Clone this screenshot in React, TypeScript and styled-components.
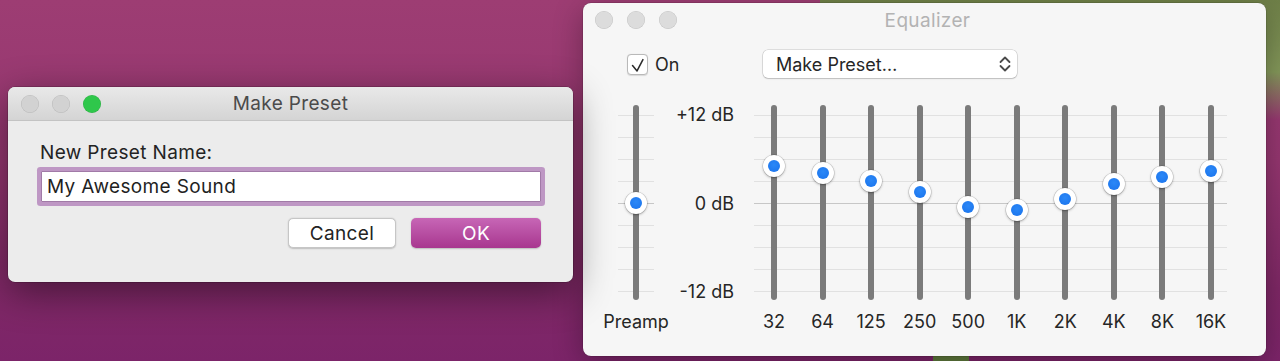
import React from "react";
import styled, { createGlobalStyle } from "styled-components";

const GlobalStyle = createGlobalStyle`
  html, body {
    margin: 0;
    padding: 0;
  }
  body {
    width: 1280px;
    height: 361px;
    overflow: hidden;
    font-family: Inter, "Noto Sans", "Liberation Sans", sans-serif;
    -webkit-font-smoothing: antialiased;
  }
`;

const Desktop = styled.div`
  position: relative;
  width: 1280px;
  height: 361px;
  overflow: hidden;
  background:
    linear-gradient(#5f7a3c, #5f7a3c) 933px 355px / 36px 6px no-repeat,
    linear-gradient(180deg, #6f8048 0%, #84985a 60%, rgba(150, 70, 120, 0) 100%) 820px 0 / 460px 120px no-repeat,
    linear-gradient(180deg, #9d3d73 0%, #953670 45%, #7f2866 80%, #7c2469 100%);
`;

const Window = styled.div<{ $left: number; $top: number; $width: number; $height: number }>`
  position: absolute;
  left: ${(p) => p.$left}px;
  top: ${(p) => p.$top}px;
  width: ${(p) => p.$width}px;
  height: ${(p) => p.$height}px;
  border-radius: 7px;
  overflow: hidden;
  display: flex;
  flex-direction: column;
`;

const PresetWindow = styled(Window)`
  z-index: 2;
  background: #ececec;
  box-shadow: 0 0 0 0.5px rgba(0, 0, 0, 0.3), 0 10px 38px rgba(0, 0, 0, 0.45);
`;

const EqWindow = styled(Window)`
  z-index: 1;
  border-radius: 8px;
  background: #f6f6f6;
  box-shadow: 0 0 0 0.5px rgba(0, 0, 0, 0.2), 0 8px 30px rgba(0, 0, 0, 0.3);
`;

const TitleBar = styled.div<{ $plain?: boolean }>`
  flex: none;
  height: ${(p) => (p.$plain ? 34 : 33)}px;
  display: grid;
  grid-template-columns: 1fr auto 1fr;
  align-items: center;
  padding: ${(p) => (p.$plain ? "0 6px 0 12px" : "0 13px")};
  background: ${(p) => (p.$plain ? "transparent" : "linear-gradient(#e9e9e9, #d4d4d4)")};
  border-bottom: ${(p) => (p.$plain ? "none" : "1px solid #c3c3c3")};
`;

const Lights = styled.div<{ $gap: number }>`
  display: flex;
  gap: ${(p) => p.$gap}px;
`;

const Light = styled.span<{ $color: string }>`
  width: 18px;
  height: 18px;
  border-radius: 50%;
  background: ${(p) => p.$color};
  box-shadow: inset 0 0 0 0.5px rgba(0, 0, 0, 0.12);
`;

const Title = styled.div<{ $dim?: boolean }>`
  font-size: 19px;
  letter-spacing: 0.35px;
  color: ${(p) => (p.$dim ? "#b3b3b3" : "#4b4b4b")};
  white-space: nowrap;
`;

const PresetBody = styled.div`
  display: flex;
  flex-direction: column;
  padding: 20px 32px 0 32px;
  font-size: 19px;
  letter-spacing: 0.35px;
`;

const FieldLabel = styled.label`
  line-height: 23px;
  color: #232323;
`;

const NameInput = styled.input`
  box-sizing: border-box;
  margin: 7px 0 0 1px;
  width: 500px;
  height: 31px;
  padding: 0 5px;
  border: 1px solid #a17aa7;
  outline: none;
  background: #fff;
  box-shadow: 0 0 0 4px #be97c4;
  border-radius: 1px;
  font: inherit;
  letter-spacing: inherit;
  color: #1f1f1f;
`;

const ButtonRow = styled.div`
  display: flex;
  justify-content: flex-end;
  gap: 15px;
  margin-top: 16px;
`;

const Button = styled.button<{ $primary?: boolean; $width: number }>`
  width: ${(p) => p.$width}px;
  height: 30px;
  border-radius: 5px;
  font: inherit;
  letter-spacing: inherit;
  padding: 0;
  border: ${(p) => (p.$primary ? "none" : "0.5px solid #c6c6c6")};
  color: ${(p) => (p.$primary ? "#fff" : "#232323")};
  background: ${(p) => (p.$primary ? "linear-gradient(#c766b6, #a8378f)" : "#fff")};
  box-shadow: 0 0.5px 1.5px rgba(0, 0, 0, 0.2);
`;

const Controls = styled.div`
  display: flex;
  align-items: center;
  height: 28px;
  margin-top: 13px;
  padding-left: 44px;
`;

const CheckLabel = styled.div`
  width: 136px;
  display: flex;
  align-items: center;
  gap: 7px;
  font-size: 18px;
  color: #262626;
`;

const CheckBox = styled.span`
  width: 21px;
  height: 21px;
  box-sizing: border-box;
  border-radius: 4px;
  background: #fff;
  border: 0.5px solid #b9b9b9;
  box-shadow: 0 0.5px 1px rgba(0, 0, 0, 0.12);
  display: flex;
`;

const Select = styled.div`
  width: 254px;
  height: 28px;
  box-sizing: border-box;
  border-radius: 5px;
  background: #fff;
  box-shadow: 0 0 0 0.5px rgba(0, 0, 0, 0.2), 0 1px 1.5px rgba(0, 0, 0, 0.15);
  display: flex;
  align-items: center;
  justify-content: space-between;
  padding: 0 5px 0 13px;
  font-size: 18px;
  color: #262626;
`;

const SliderArea = styled.div`
  display: flex;
  align-items: flex-start;
  margin-top: 27px;
  padding-left: 35px;
`;

const Column = styled.div<{ $width: number }>`
  width: ${(p) => p.$width}px;
  display: flex;
  flex-direction: column;
  align-items: center;
`;

const Rail = styled.div<{ $width: number; $padLeft?: number; $padRight?: number }>`
  box-sizing: border-box;
  width: ${(p) => p.$width}px;
  height: 195px;
  display: flex;
  justify-content: ${(p) => (p.$padLeft ? "space-between" : "center")};
  padding: 0 ${(p) => p.$padRight ?? 0}px 0 ${(p) => p.$padLeft ?? 0}px;
  background-image:
    linear-gradient(#c7c7c7, #c7c7c7),
    repeating-linear-gradient(to bottom, transparent 0 10px, #e1e1e1 10px 11px, transparent 11px 22px);
  background-size: 100% 1px, 100% 195px;
  background-position: 0 98px, 0 0;
  background-repeat: no-repeat;
`;

const Track = styled.div`
  position: relative;
  width: 6px;
  height: 100%;
  border-radius: 3px;
  background: #7b7b7b;
`;

const Knob = styled.span<{ $db: number }>`
  position: absolute;
  left: 50%;
  top: ${(p) => 98 - p.$db * 7.333}px;
  width: 22px;
  height: 22px;
  margin: -11px 0 0 -11px;
  border-radius: 50%;
  background: #fff;
  box-shadow: 0 0 0 0.5px rgba(0, 0, 0, 0.16), 0 1px 2.5px rgba(0, 0, 0, 0.3);
  display: flex;
  align-items: center;
  justify-content: center;

  &::after {
    content: "";
    width: 12px;
    height: 12px;
    border-radius: 50%;
    background: radial-gradient(circle at 50% 40%, #2b88f7, #1a73ec);
  }
`;

const SliderLabel = styled.div`
  margin-top: 11px;
  font-size: 18px;
  line-height: 22px;
  color: #262626;
  white-space: nowrap;
`;

const Scale = styled.div`
  box-sizing: border-box;
  width: 100px;
  height: 199px;
  margin-top: -1px;
  padding-right: 20px;
  display: flex;
  flex-direction: column;
  justify-content: space-between;
  align-items: flex-end;
  font-size: 18px;
  line-height: 22px;
  color: #262626;
`;

const LabelRow = styled.div`
  display: flex;
  justify-content: space-between;
  padding: 0 13px 0 17px;
  margin-top: 11px;
`;

const BandLabel = styled.div`
  width: 6px;
  display: flex;
  justify-content: center;
  font-size: 18px;
  line-height: 22px;
  color: #262626;
  white-space: nowrap;
`;

const bands = [
  { label: "32", db: 5.05 },
  { label: "64", db: 4.05 },
  { label: "125", db: 2.95 },
  { label: "250", db: 1.45 },
  { label: "500", db: -0.5 },
  { label: "1K", db: -0.95 },
  { label: "2K", db: 0.55 },
  { label: "4K", db: 2.55 },
  { label: "8K", db: 3.6 },
  { label: "16K", db: 4.4 },
];

const App = () => {
  return (
    <Desktop>
      <GlobalStyle />

      <PresetWindow $left={8} $top={87} $width={565} $height={195}>
        <TitleBar>
          <Lights $gap={13}>
            <Light $color="#d2d2d2" />
            <Light $color="#d2d2d2" />
            <Light $color="#2fc74b" />
          </Lights>
          <Title>Make Preset</Title>
        </TitleBar>
        <PresetBody>
          <FieldLabel>New Preset Name:</FieldLabel>
          <NameInput value="My Awesome Sound" readOnly />
          <ButtonRow>
            <Button $width={108}>Cancel</Button>
            <Button $width={130} $primary>
              OK
            </Button>
          </ButtonRow>
        </PresetBody>
      </PresetWindow>

      <EqWindow $left={583} $top={3} $width={683} $height={353}>
        <TitleBar $plain>
          <Lights $gap={14}>
            <Light $color="#dcdcdc" />
            <Light $color="#dcdcdc" />
            <Light $color="#dcdcdc" />
          </Lights>
          <Title $dim>Equalizer</Title>
        </TitleBar>

        <Controls>
          <CheckLabel>
            <CheckBox>
              <svg width="21" height="21" viewBox="0 0 21 21">
                <path d="M5 10.5 L10 16.5 L16.5 4" fill="none" stroke="#2b2b2b" strokeWidth="1.7" strokeLinecap="round" strokeLinejoin="round" />
              </svg>
            </CheckBox>
            On
          </CheckLabel>
          <Select>
            Make Preset…
            <svg width="14" height="18" viewBox="0 0 14 18">
              <path d="M2.5 7 L7 2.5 L11.5 7 M2.5 11 L7 15.5 L11.5 11" fill="none" stroke="#4a4a4a" strokeWidth="1.8" strokeLinecap="round" strokeLinejoin="round" />
            </svg>
          </Select>
        </Controls>

        <SliderArea>
          <Column $width={36}>
            <Rail $width={36}>
              <Track>
                <Knob $db={0} />
              </Track>
            </Rail>
            <SliderLabel>Preamp</SliderLabel>
          </Column>

          <Scale>
            <span>+12 dB</span>
            <span>0 dB</span>
            <span>-12 dB</span>
          </Scale>

          <div>
            <Rail $width={473} $padLeft={17} $padRight={13}>
              {bands.map((b) => (
                <Track key={b.label}>
                  <Knob $db={b.db} />
                </Track>
              ))}
            </Rail>
            <LabelRow>
              {bands.map((b) => (
                <BandLabel key={b.label}>{b.label}</BandLabel>
              ))}
            </LabelRow>
          </div>
        </SliderArea>
      </EqWindow>
    </Desktop>
  );
};

export default App;
